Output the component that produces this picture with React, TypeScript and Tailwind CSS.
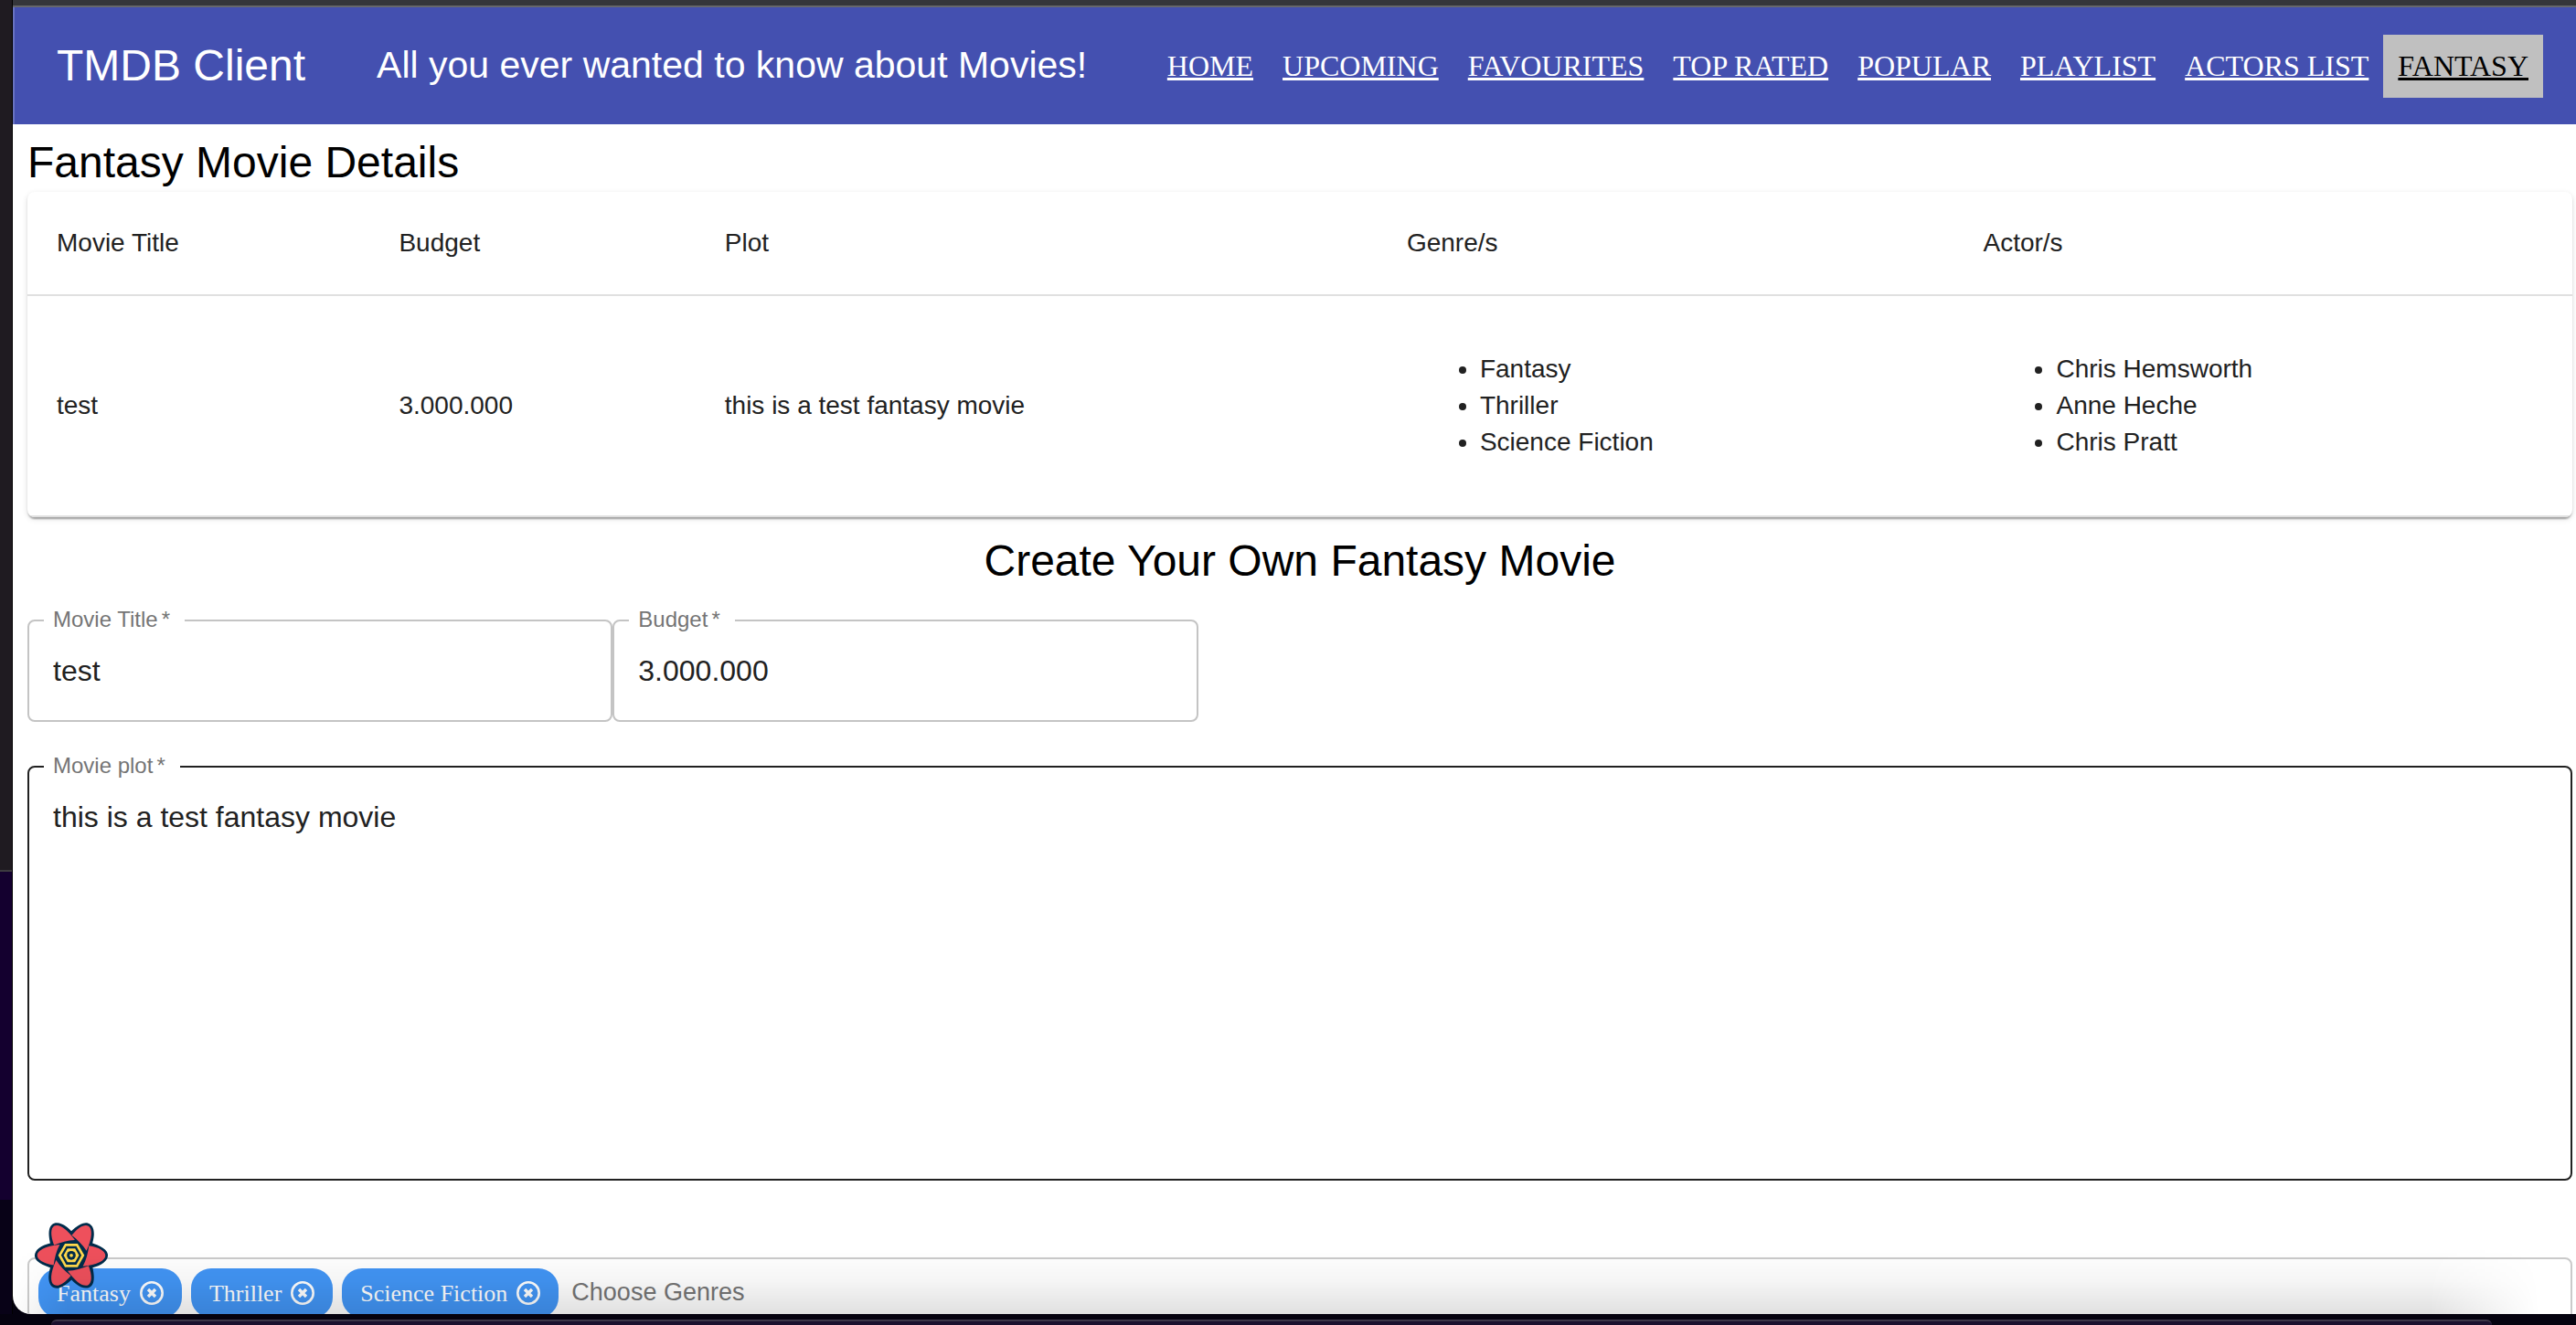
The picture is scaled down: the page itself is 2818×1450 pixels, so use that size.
import React, { useState } from "react";

const NAV_LINKS = ["Home", "Upcoming", "Favourites", "Top Rated", "Popular", "Playlist", "Actors List", "Fantasy"];
const GENRES = ["Fantasy", "Thriller", "Science Fiction"];
const ACTORS = ["Chris Hemsworth", "Anne Heche", "Chris Pratt"];

function SiteHeader() {
  return (
    <header className="flex h-32 shrink-0 items-center border-l-2 border-[#6a74c0] bg-[#4450b0] pr-9 pl-[46px] text-white">
      <span className="mr-[78px] text-5xl whitespace-nowrap">TMDB Client</span>
      <span className="grow text-[41px] whitespace-nowrap">All you ever wanted to know about Movies!</span>
      <nav className="flex font-['Liberation_Serif',serif] text-[32px] leading-[37px] uppercase">
        {NAV_LINKS.map((label) => (
          <a
            key={label}
            href="#"
            className={
              label === "Fantasy"
                ? "bg-[#c0c0c0] p-4 whitespace-nowrap text-black underline decoration-[3px]"
                : "p-4 whitespace-nowrap underline decoration-[3px]"
            }
          >
            {label}
          </a>
        ))}
      </nav>
    </header>
  );
}

function BulletList({ items }: { items: string[] }) {
  return (
    <ul className="my-7 list-disc pl-20">
      {items.map((item) => (
        <li key={item}>{item}</li>
      ))}
    </ul>
  );
}

function MovieTable() {
  return (
    <div className="overflow-hidden rounded-lg bg-white shadow-[0_4px_2px_-2px_rgba(0,0,0,0.2),0_2px_2px_0_rgba(0,0,0,0.14),0_2px_6px_0_rgba(0,0,0,0.12)]">
      <table className="w-full table-fixed text-left text-[28px] leading-10">
        <colgroup>
          <col className="w-[13.45%]" />
          <col className="w-[12.8%]" />
          <col className="w-[26.8%]" />
          <col className="w-[22.65%]" />
          <col />
        </colgroup>
        <thead>
          <tr className="h-[113px] border-b-2 border-[#e0e0e0]">
            {["Movie Title", "Budget", "Plot", "Genre/s", "Actor/s"].map((title) => (
              <th key={title} scope="col" className="px-8 font-normal">
                {title}
              </th>
            ))}
          </tr>
        </thead>
        <tbody>
          <tr className="border-b-2 border-[#e0e0e0]">
            <td className="p-8">test</td>
            <td className="p-8">3.000.000</td>
            <td className="p-8">this is a test fantasy movie</td>
            <td className="p-8">
              <BulletList items={GENRES} />
            </td>
            <td className="p-8">
              <BulletList items={ACTORS} />
            </td>
          </tr>
        </tbody>
      </table>
    </div>
  );
}

function FieldLabel({ id, text }: { id: string; text: string }) {
  return (
    <label
      htmlFor={id}
      className="absolute -top-4 left-[18px] bg-white pr-4 pl-[10px] text-2xl leading-8 whitespace-nowrap text-[#757575]"
    >
      {text}
      <span className="ml-1">*</span>
    </label>
  );
}

function TextField({ id, label, value }: { id: string; label: string; value: string }) {
  return (
    <div className="relative w-[23%]">
      <input
        id={id}
        defaultValue={value}
        required
        className="h-28 w-full rounded-lg border-2 border-[#c4c4c4] bg-transparent px-[26px] text-[32px] outline-none"
      />
      <FieldLabel id={id} text={label} />
    </div>
  );
}

function RemoveIcon() {
  return (
    <svg viewBox="0 0 26 26" className="size-[26px]" fill="none" stroke="currentColor" aria-hidden="true">
      <circle cx="13" cy="13" r="11.7" strokeWidth="2.6" />
      <path d="M9 9l8 8M17 9l-8 8" strokeWidth="3.4" />
    </svg>
  );
}

function GenrePicker() {
  const [selected, setSelected] = useState(GENRES);
  return (
    <div className="flex min-h-[100px] items-start gap-[10px] rounded-lg border-2 border-[#cacaca] p-[10px]">
      {selected.map((genre) => (
        <span
          key={genre}
          className="flex h-[54px] items-center gap-[10px] rounded-[22px] bg-[#4295f5] px-5 font-['Liberation_Serif',serif] text-[26px] whitespace-nowrap text-white"
        >
          {genre}
          <button
            type="button"
            aria-label={`Remove ${genre}`}
            onClick={() => setSelected(selected.filter((g) => g !== genre))}
          >
            <RemoveIcon />
          </button>
        </span>
      ))}
      <input
        aria-label="Choose Genres"
        placeholder="Choose Genres"
        className="ml-1 h-[52px] grow bg-transparent text-[27px] outline-none placeholder:text-[#757575]"
      />
    </div>
  );
}

function QueryLogo() {
  return (
    <svg viewBox="33 10 190 170" className="h-[72px] w-20" aria-hidden="true">
      <path
        fill="#002c4b"
        d="M72.7 61.3C69.6 46.4 69 34.9 71 26.5C72.2 21.6 74.3 17.5 77.6 14.6C81.1 11.5 85.5 10 90.5 10C98.7 10 107.3 13.7 116.5 20.8C120.2 23.7 124.1 27.2 128.1 31.2C128.5 30.8 128.8 30.4 129.2 30.1C140.6 19.9 150.3 13.6 158.5 11.2C163.4 9.7 168 9.6 172.1 11C176.6 12.5 180.1 15.5 182.5 19.8C186.6 26.9 187.7 36.2 186.2 47.7C185.6 52.4 184.5 57.5 183 63.1C183.6 63.1 184.1 63.3 184.7 63.4C199.2 68.2 209.5 73.4 215.7 79.3C219.4 82.8 221.8 86.7 222.6 91C223.6 95.6 222.7 100.2 220.2 104.5C216.1 111.5 208.6 117.1 197.9 121.5C193.6 123.3 188.7 124.9 183.3 126.4C183.5 126.9 183.7 127.5 183.9 128.1C187 143.1 187.6 154.6 185.6 163C184.4 167.9 182.3 172 179 174.9C175.5 178 171.1 179.5 166.1 179.5C157.9 179.5 149.3 175.8 140.1 168.7C136.3 165.8 132.4 162.2 128.3 158.1C127.9 158.8 127.4 159.4 126.8 159.9C115.4 170.1 105.7 176.4 97.5 178.8C92.6 180.3 88 180.4 83.9 179C79.4 177.5 75.9 174.5 73.5 170.2C69.4 163.1 68.3 153.8 69.8 142.3C70.4 137.4 71.6 132.1 73.2 126.3C72.5 126.3 71.9 126.1 71.3 125.9C56.8 121.1 46.5 116 40.3 110.1C36.6 106.6 34.2 102.7 33.4 98.4C32.4 93.8 33.3 89.2 35.8 84.9C39.9 77.9 47.4 72.3 58.1 67.8C62.5 66 67.6 64.4 73.2 62.9C73 62.4 72.8 61.9 72.7 61.3Z"
      />
      {[0, 60, 120, 180, 240, 300].map((angle) => (
        <path
          key={angle}
          fill="#ee505c"
          transform={`rotate(${angle} 128 94.7)`}
          d="M98 66.5C60 70 39.5 82 39.5 94.5C39.5 106 56 116 82 120C85 101 89 83 98 66.5Z"
        />
      ))}
      <path fill="#ffd94c" d="M111.5 64H144.5L162 94.5L144.5 125H111.5L94 94.5Z" />
      <path fill="#002c4b" d="M115 70.5H141L154.5 94.5L141 118.5H115L101.5 94.5Z" />
      <path fill="#ffd94c" d="M118 76.5H138L148 94.5L138 112.5H118L108 94.5Z" />
      <circle cx="128" cy="94.5" r="11.5" fill="#002c4b" />
      <circle cx="128" cy="94.5" r="4.5" fill="#ffd94c" />
    </svg>
  );
}

export default function App() {
  return (
    <div className="flex h-screen flex-col overflow-hidden bg-[#05020f] font-['Liberation_Sans',Arial,sans-serif]">
      <div className="flex min-h-0 flex-1">
        {/* desktop visible beside the browser window */}
        <div className="flex w-[14px] shrink-0 flex-col border-r border-black bg-[#14002f]">
          <div className="h-[954px] shrink-0 border-b-2 border-[#3c3a3f] bg-[#1f1b21]" />
          <div className="h-[359px] shrink-0" />
          <div className="grow bg-[#080217]" />
        </div>

        <div className="relative flex min-w-0 flex-1 flex-col overflow-hidden rounded-bl-[20px] bg-white text-[#212121]">
          <div className="h-2 shrink-0 border-b-2 border-[#66676b] bg-[#35363a]" />
          <SiteHeader />
          <main className="flex shrink-0 flex-col pt-[10px] pr-1 pl-4">
            <h1 className="text-5xl leading-[64px] text-black">Fantasy Movie Details</h1>
            <MovieTable />
            <h2 className="mt-4 text-center text-5xl leading-[64px] text-black">Create Your Own Fantasy Movie</h2>
            <form className="mt-8 flex flex-col">
              <div className="flex">
                <TextField id="title" label="Movie Title" value="test" />
                <TextField id="budget" label="Budget" value="3.000.000" />
              </div>
              <div className="relative mt-12 flex">
                <textarea
                  id="plot"
                  required
                  rows={10}
                  defaultValue="this is a test fantasy movie"
                  className="w-full resize-none rounded-lg border-2 border-[#212121] bg-transparent px-[26px] py-[35px] text-[32px] leading-[38px] outline-none"
                />
                <FieldLabel id="plot" text="Movie plot" />
              </div>
              <div className="mt-[84px]">
                <GenrePicker />
              </div>
            </form>
          </main>

          <button type="button" aria-label="Open query devtools" className="absolute bottom-7 left-6">
            <QueryLogo />
          </button>
          <div className="pointer-events-none absolute inset-x-0 bottom-0 h-[72px] bg-linear-to-t from-black/12 via-black/4 to-transparent [mask-image:linear-gradient(to_right,transparent,black_60px,black_calc(100%-160px),transparent_calc(100%-40px))]" />
        </div>
      </div>

      {/* dock edge under the window */}
      <div className="flex h-3 shrink-0 flex-col justify-end pr-[92px] pl-[56px]">
        <div className="h-[6px] rounded-t-[20px] border-t-2 border-[#3d3648] bg-[#1b102e]" />
      </div>
    </div>
  );
}
